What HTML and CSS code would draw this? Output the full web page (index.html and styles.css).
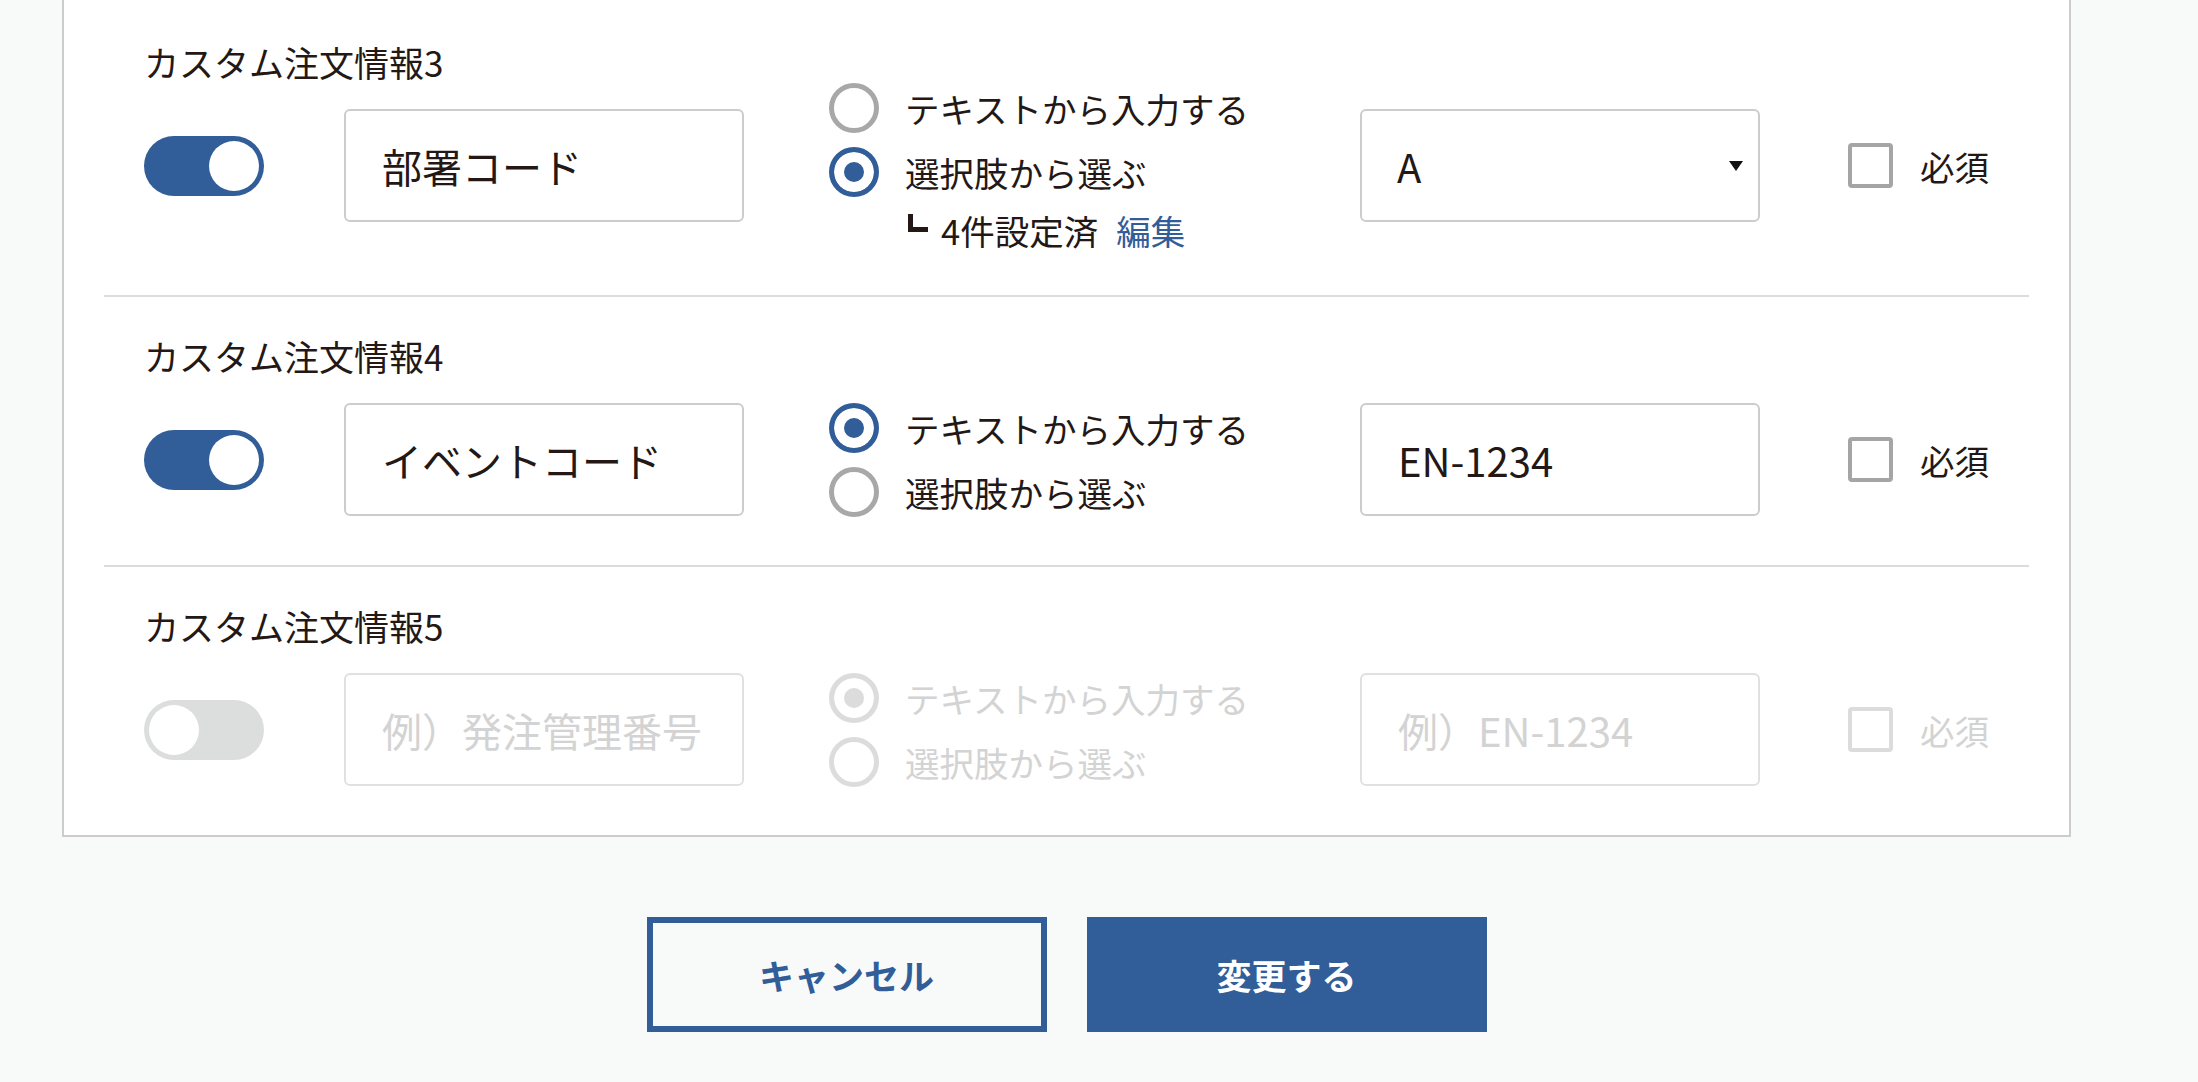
FILE: index.html
```html
<!DOCTYPE html>
<html lang="ja">
<head>
    <meta charset="UTF-8">
    <meta name="viewport" content="width=device-width, initial-scale=1.0">
    <title>カスタム注文情報の設定</title>
    <link rel="stylesheet" href="styles.css">
</head>
<body>
    <div class="page">
        <div class="card">
            <div class="field-row has-note">
                <div class="field-label">カスタム注文情報3</div>
                <div class="field-body">
                    <span class="toggle is-on"></span>
                    <input class="text-input" type="text" value="部署コード">
                    <div class="radio-group">
                        <label class="radio"><input type="radio" name="type3"><span>テキストから入力する</span></label>
                        <label class="radio"><input type="radio" name="type3" checked><span>選択肢から選ぶ</span></label>
                        <div class="radio-note"><span class="note-mark"></span>4件設定済<a href="#" class="note-link">編集</a></div>
                    </div>
                    <div class="select-box"><span>A</span></div>
                    <label class="check"><input type="checkbox"><span>必須</span></label>
                </div>
            </div>

            <div class="field-row">
                <div class="field-label">カスタム注文情報4</div>
                <div class="field-body">
                    <span class="toggle is-on"></span>
                    <input class="text-input" type="text" value="イベントコード">
                    <div class="radio-group">
                        <label class="radio"><input type="radio" name="type4" checked><span>テキストから入力する</span></label>
                        <label class="radio"><input type="radio" name="type4"><span>選択肢から選ぶ</span></label>
                    </div>
                    <input class="text-input no-gap" type="text" value="EN-1234">
                    <label class="check"><input type="checkbox"><span>必須</span></label>
                </div>
            </div>

            <div class="field-row is-disabled">
                <div class="field-label">カスタム注文情報5</div>
                <div class="field-body">
                    <span class="toggle"></span>
                    <input class="text-input" type="text" placeholder="例）発注管理番号" disabled>
                    <div class="radio-group">
                        <label class="radio"><input type="radio" name="type5" checked disabled><span>テキストから入力する</span></label>
                        <label class="radio"><input type="radio" name="type5" disabled><span>選択肢から選ぶ</span></label>
                    </div>
                    <input class="text-input no-gap" type="text" placeholder="例）EN-1234" disabled>
                    <label class="check"><input type="checkbox" disabled><span>必須</span></label>
                </div>
            </div>
        </div>

        <div class="actions">
            <button class="btn btn-outline">キャンセル</button>
            <button class="btn btn-primary">変更する</button>
        </div>
    </div>
</body>
</html>
```

FILE: styles.css
```css
* {
    margin: 0;
    padding: 0;
    box-sizing: border-box;
}

body {
    background: #f8f9f9;
    font-family: "Noto Sans CJK JP", "Noto Sans", sans-serif;
    color: #231815;
}

.page {
    width: 2009px;
    margin-left: 62px;
}

.card {
    background: #fff;
    border: 2px solid #cccccc;
    margin-top: -30px;
    padding: 0 40px;
}

.field-row {
    padding: 39px 40px 49px;
    border-bottom: 2px solid #dcdcdc;
}

.field-row:first-child {
    padding-top: 70px;
}

.field-row:last-child {
    border-bottom: none;
}

.field-row.has-note {
    padding-bottom: 73px;
}

.field-label {
    font-size: 35px;
    line-height: 40px;
}

.field-body {
    display: flex;
    align-items: center;
    height: 113px;
    margin-top: 27px;
}

/* toggle */
.toggle {
    position: relative;
    flex-shrink: 0;
    width: 120px;
    height: 60px;
    border-radius: 30px;
    background: #dcdddd;
}

.toggle::after {
    content: "";
    position: absolute;
    top: 5px;
    left: 5px;
    width: 50px;
    height: 50px;
    border-radius: 50%;
    background: #fff;
}

.toggle.is-on {
    background: #315d99;
}

.toggle.is-on::after {
    left: 65px;
}

/* inputs */
.text-input {
    flex-shrink: 0;
    width: 400px;
    height: 113px;
    margin-left: 80px;
    padding: 0 36px;
    border: 2px solid #cccccc;
    border-radius: 6px;
    background: #fff;
    font-family: inherit;
    font-size: 40px;
    color: #231815;
    outline: none;
}

.text-input.no-gap {
    margin-left: 0;
}

.text-input::placeholder {
    color: #d3d3d3;
}

.text-input:disabled {
    border-color: #e0e0e0;
    background: #fff;
}

.select-box {
    flex-shrink: 0;
    display: flex;
    align-items: center;
    justify-content: space-between;
    width: 400px;
    height: 113px;
    padding: 0 15px 0 35px;
    border: 2px solid #cccccc;
    border-radius: 6px;
    font-size: 40px;
}

.select-box::after {
    content: "";
    border-left: 7px solid transparent;
    border-right: 7px solid transparent;
    border-top: 10px solid #111;
}

/* radios */
.radio-group {
    flex-shrink: 0;
    width: 531px;
    margin-left: 85px;
}

.radio {
    display: flex;
    align-items: center;
    height: 64px;
    font-size: 34.5px;
}

.radio input {
    appearance: none;
    flex-shrink: 0;
    width: 50px;
    height: 50px;
    margin-right: 26px;
    border: 5px solid #a8a8a8;
    border-radius: 50%;
    background: #fff;
}

.radio input:checked {
    border-color: #315d99;
    background: #315d99;
    box-shadow: inset 0 0 0 10px #fff;
}

.radio-note {
    display: flex;
    align-items: center;
    height: 52px;
    padding-left: 79px;
    font-size: 34.5px;
}

.note-mark {
    width: 20px;
    height: 18px;
    margin-right: 13px;
    margin-bottom: 14px;
    border-left: 5px solid #231815;
    border-bottom: 5px solid #231815;
}

.note-link {
    margin-left: 18px;
    color: #315d99;
    text-decoration: none;
}

/* checkbox */
.check {
    display: flex;
    align-items: center;
    margin-left: 88px;
    font-size: 34.5px;
}

.check input {
    appearance: none;
    width: 45px;
    height: 45px;
    margin-right: 27px;
    border: 4px solid #a5a5a5;
    border-radius: 4px;
    background: #fff;
}

/* disabled row */
.is-disabled .radio,
.is-disabled .check {
    color: #d3d3d3;
}

.is-disabled .radio input,
.is-disabled .check input {
    border-color: #dcdcdc;
}

.is-disabled .radio input:checked {
    background: #dcdcdc;
}

/* buttons */
.actions {
    display: flex;
    justify-content: center;
    gap: 40px;
    margin-top: 80px;
}

.btn {
    width: 400px;
    height: 115px;
    border: 6px solid #315d99;
    font-family: inherit;
    font-size: 35px;
    font-weight: 700;
    cursor: pointer;
}

.btn-outline {
    background: transparent;
    color: #315d99;
}

.btn-primary {
    background: #315d99;
    color: #fff;
}
```
